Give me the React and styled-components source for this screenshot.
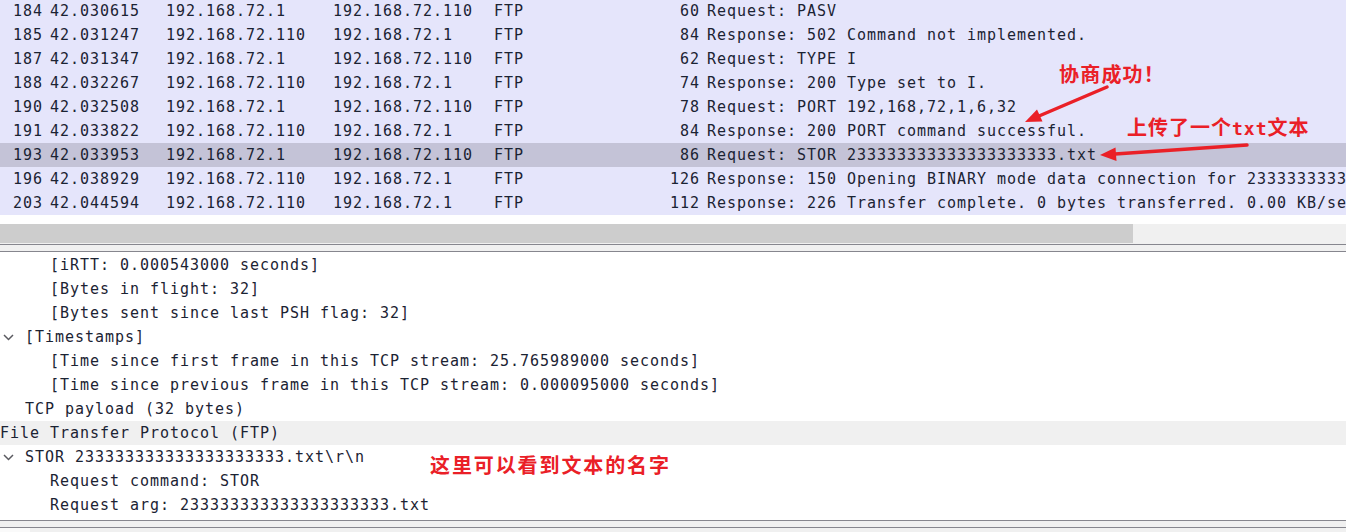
import React from "react";
import styled, { createGlobalStyle } from "styled-components";

const Global = createGlobalStyle`
  html, body { margin: 0; padding: 0; background: #fff; overflow: hidden; }
  body { width: 1346px; height: 532px; }
`;

const Page = styled.div`
  position: relative;
  width: 1346px;
  height: 532px;
  overflow: hidden;
  font-family: "DejaVu Sans Mono", "Liberation Mono", monospace;
  font-size: 15px;
  letter-spacing: 0.97px;
  color: #1b2333;
  display: flex;
  flex-direction: column;
`;

const PacketList = styled.div`
  margin-top: -1px;
  background: #e5e5fb;
  display: flex;
  flex-direction: column;
`;

const PacketRow = styled.div`
  display: grid;
  grid-template-columns: 50px 116px 167px 161px 136px 70px 1fr;
  height: 24px;
  align-items: center;
  white-space: nowrap;
  background: ${(p) => (p.$selected ? "#c4c3d7" : "transparent")};
`;

const Cell = styled.span`
  overflow: hidden;
  text-align: ${(p) => (p.$right ? "right" : "left")};
  padding-right: ${(p) => (p.$pad ? "7px" : "0")};
`;

const InfoCell = styled.span`
  padding-left: 7px;
  overflow: hidden;
`;

const Gap = styled.div`
  height: 9px;
  background: #fff;
`;

const HScroll = styled.div`
  height: 20px;
  background: #f0f0f0;
  display: flex;
`;

const Thumb = styled.div`
  width: 1133px;
  height: 19px;
  background: #cdcdcd;
`;

const Splitter = styled.div`
  height: 6px;
  background: #f0f0f0;
  border-top: 1px solid #86868e;
  border-bottom: 1px solid #86868e;
`;

const Details = styled.div`
  box-sizing: border-box;
  height: 268px;
  padding-top: 1px;
  display: flex;
  flex-direction: column;
  background: #fff;
`;

const TreeRow = styled.div`
  height: 24px;
  flex: none;
  display: flex;
  align-items: center;
  white-space: nowrap;
  padding-left: ${(p) => p.$level * 25}px;
  background: ${(p) => (p.$highlight ? "#f0f0f0" : "transparent")};
`;

const Expander = styled.span`
  width: 25px;
  margin-left: -25px;
  display: flex;
  align-items: center;
  padding-left: 3px;
  box-sizing: border-box;
`;

const BottomBar = styled.div`
  height: 6px;
  background: #f0f0f0;
  border-top: 1px solid #86868e;
  border-bottom: 1px solid #86868e;
`;

const BottomStrip = styled.div`
  flex: 1;
  background: #f0f0f0;
  display: flex;
`;

const BottomStripLeft = styled.div`
  width: 30px;
  background: #fafafa;
`;

const Note = styled.div`
  position: absolute;
  left: ${(p) => p.$x}px;
  top: ${(p) => p.$y}px;
  font-family: "Noto Sans CJK SC", "Noto Sans", sans-serif;
  font-weight: 700;
  font-size: 20px;
  line-height: 20px;
  letter-spacing: ${(p) => p.$spacing || 0}px;
  color: #ea2027;
  white-space: nowrap;
`;

const Latin = styled.span`
  font-family: "DejaVu Sans Mono", monospace;
  font-size: 18px;
  letter-spacing: 1px;
`;

const Arrows = styled.svg`
  position: absolute;
  left: 0;
  top: 0;
  pointer-events: none;
`;

const FILE = "233333333333333333333.txt";

const packets = [
  ["184", "42.030615", "192.168.72.1", "192.168.72.110", "FTP", "60", "Request: PASV"],
  ["185", "42.031247", "192.168.72.110", "192.168.72.1", "FTP", "84", "Response: 502 Command not implemented."],
  ["187", "42.031347", "192.168.72.1", "192.168.72.110", "FTP", "62", "Request: TYPE I"],
  ["188", "42.032267", "192.168.72.110", "192.168.72.1", "FTP", "74", "Response: 200 Type set to I."],
  ["190", "42.032508", "192.168.72.1", "192.168.72.110", "FTP", "78", "Request: PORT 192,168,72,1,6,32"],
  ["191", "42.033822", "192.168.72.110", "192.168.72.1", "FTP", "84", "Response: 200 PORT command successful."],
  ["193", "42.033953", "192.168.72.1", "192.168.72.110", "FTP", "86", `Request: STOR ${FILE}`, true],
  ["196", "42.038929", "192.168.72.110", "192.168.72.1", "FTP", "126", `Response: 150 Opening BINARY mode data connection for ${FILE}`],
  ["203", "42.044594", "192.168.72.110", "192.168.72.1", "FTP", "112", "Response: 226 Transfer complete. 0 bytes transferred. 0.00 KB/sec."],
];

const tree = [
  { level: 2, text: "[iRTT: 0.000543000 seconds]" },
  { level: 2, text: "[Bytes in flight: 32]" },
  { level: 2, text: "[Bytes sent since last PSH flag: 32]" },
  { level: 1, text: "[Timestamps]", open: true },
  { level: 2, text: "[Time since first frame in this TCP stream: 25.765989000 seconds]" },
  { level: 2, text: "[Time since previous frame in this TCP stream: 0.000095000 seconds]" },
  { level: 1, text: "TCP payload (32 bytes)" },
  { level: 0, text: "File Transfer Protocol (FTP)", highlight: true },
  { level: 1, text: `STOR ${FILE}\\r\\n`, open: true },
  { level: 2, text: "Request command: STOR" },
  { level: 2, text: `Request arg: ${FILE}` },
];

const Chevron = () => (
  <svg width="11" height="7" viewBox="0 0 11 7">
    <polyline points="1,1 5.5,5.5 10,1" fill="none" stroke="#5a5a60" strokeWidth="1.5" />
  </svg>
);

export default function App() {
  return (
    <>
      <Global />
      <Page>
        <PacketList>
          {packets.map((p) => (
            <PacketRow key={p[0]} $selected={p[7]}>
              <Cell $right $pad>{p[0]}</Cell>
              <Cell>{p[1]}</Cell>
              <Cell>{p[2]}</Cell>
              <Cell>{p[3]}</Cell>
              <Cell>{p[4]}</Cell>
              <Cell $right>{p[5]}</Cell>
              <InfoCell>{p[6]}</InfoCell>
            </PacketRow>
          ))}
        </PacketList>
        <Gap />
        <HScroll>
          <Thumb />
        </HScroll>
        <Splitter />
        <Details>
          {tree.map((t, i) => (
            <TreeRow key={i} $level={t.level} $highlight={t.highlight}>
              {t.open && (
                <Expander>
                  <Chevron />
                </Expander>
              )}
              {t.text}
            </TreeRow>
          ))}
        </Details>
        <BottomBar />
        <BottomStrip>
          <BottomStripLeft />
        </BottomStrip>

        <Note $x={1059} $y={64} $spacing={1.2}>协商成功！</Note>
        <Note $x={1127} $y={117} $spacing={1}>
          上传了一个<Latin>txt</Latin>文本
        </Note>
        <Note $x={430} $y={455} $spacing={1.9}>这里可以看到文本的名字</Note>

        <Arrows width="1346" height="532" viewBox="0 0 1346 532">
          <line x1="1107" y1="87" x2="1039" y2="116" stroke="#ea2027" strokeWidth="3.5" strokeLinecap="round" />
          <polygon points="1025,122 1042.5,121.5 1037,109.5" fill="#ea2027" />
          <line x1="1247" y1="145" x2="1115" y2="154" stroke="#ea2027" strokeWidth="3.5" strokeLinecap="round" />
          <polygon points="1100,155 1116.5,161 1115.5,147.5" fill="#ea2027" />
        </Arrows>
      </Page>
    </>
  );
}
